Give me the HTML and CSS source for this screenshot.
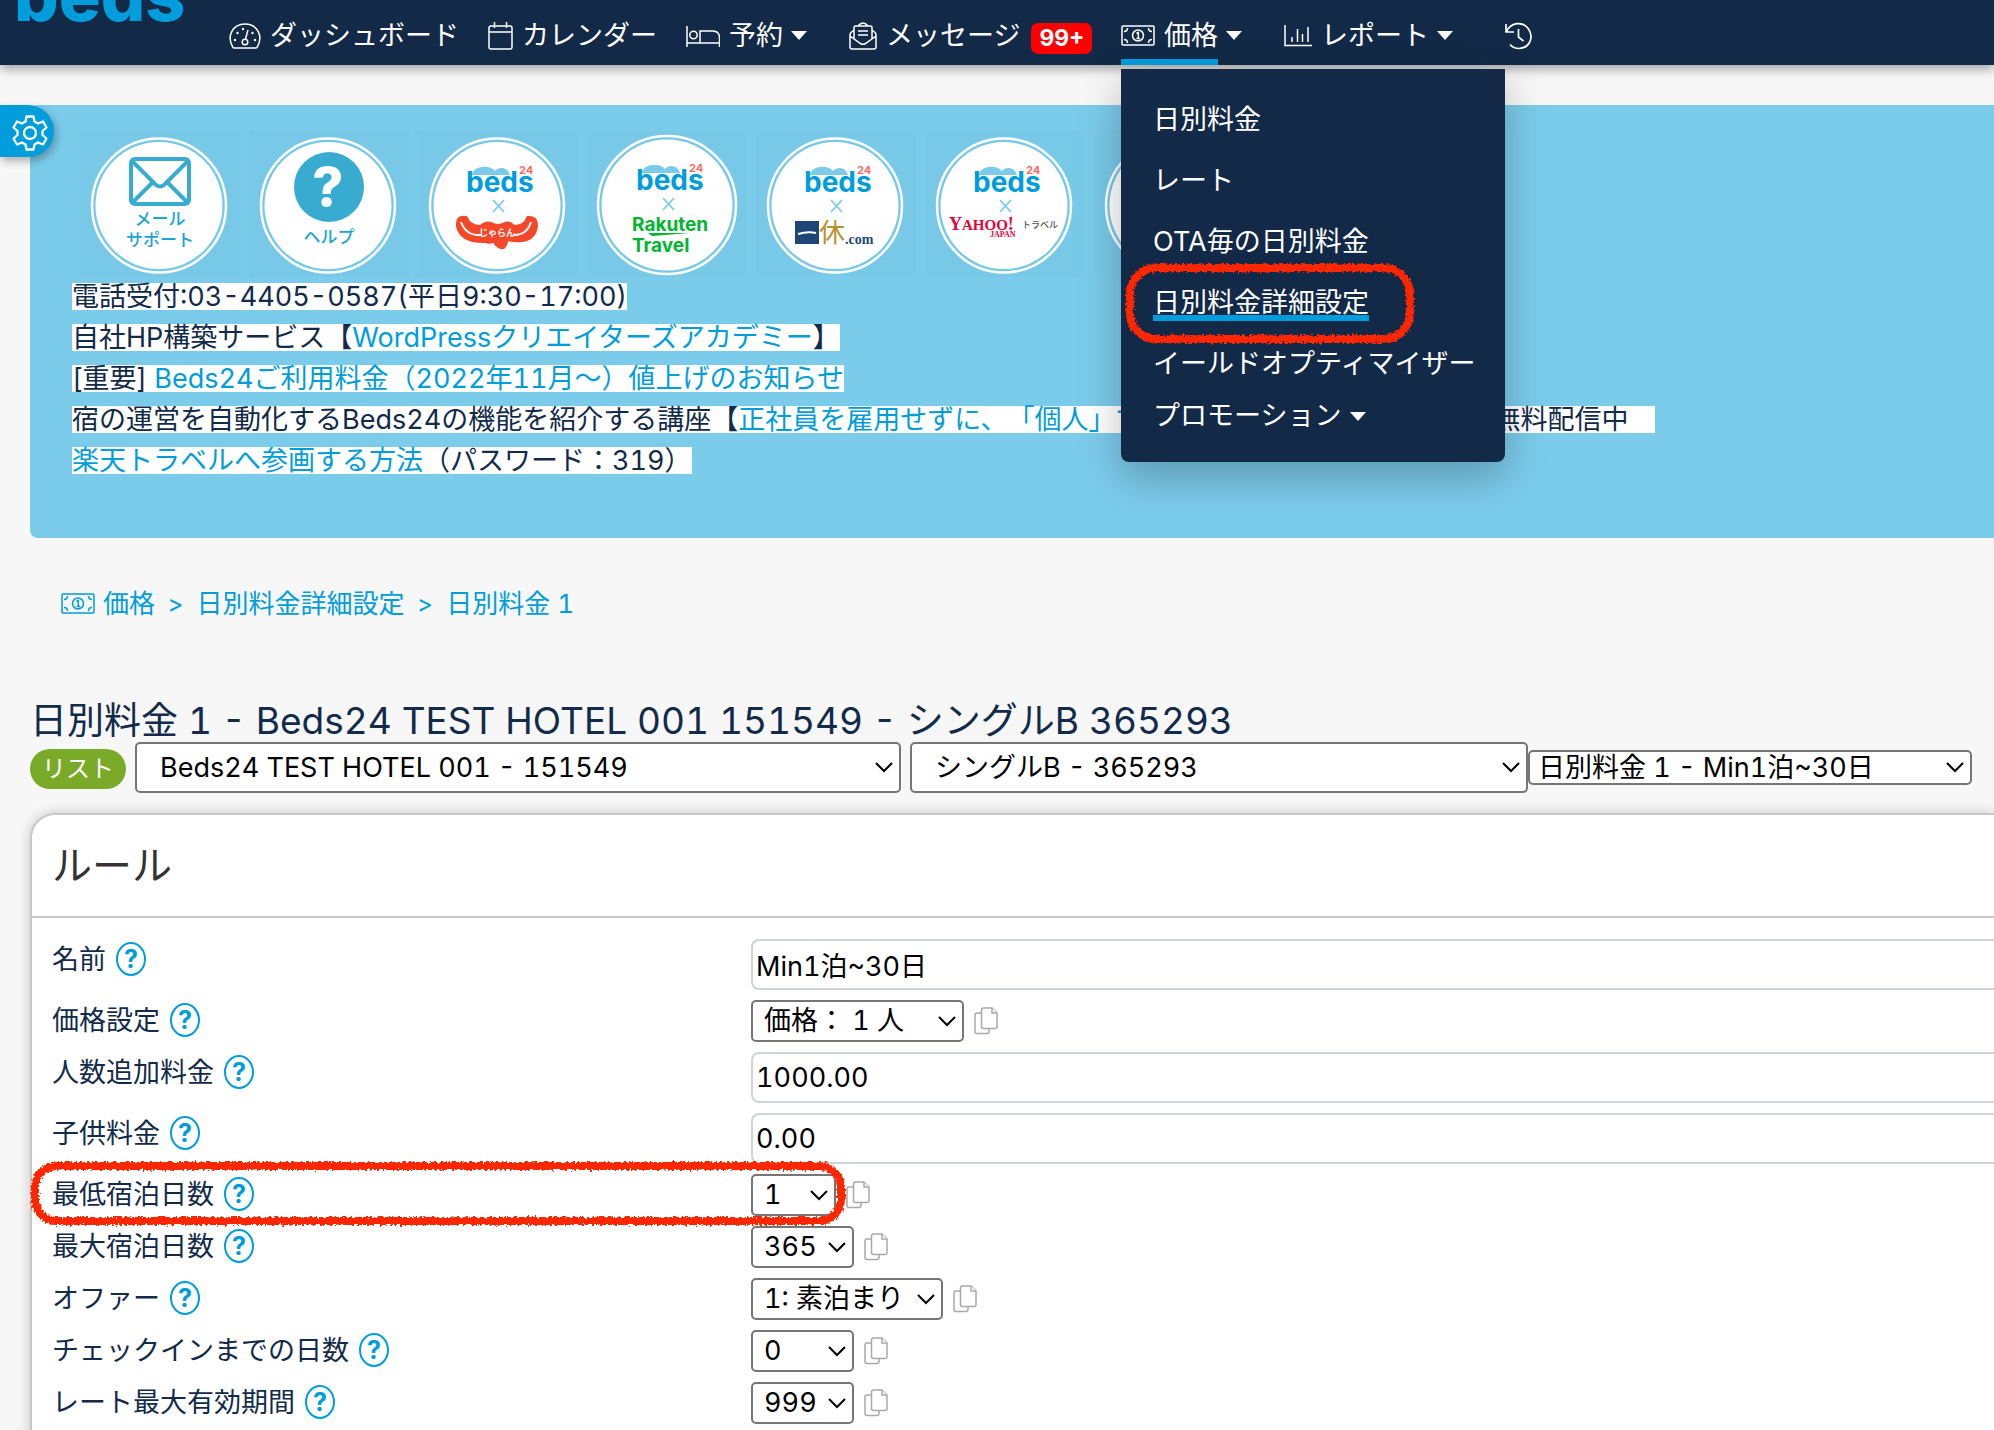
FILE: index.html
```html
<!DOCTYPE html>
<html lang="ja">
<head>
  <meta charset="UTF-8">
  <meta name="viewport" content="width=device-width, initial-scale=1.0">
  <title>日別料金詳細設定 - Beds24</title>
  <link rel="stylesheet" href="styles.css">
</head>
<body>

  <!-- Shared shapes -->
  <svg class="sprite" aria-hidden="true">
    <symbol id="i-money" viewBox="0 0 34 21">
      <g fill="none" stroke="currentColor" stroke-width="1.5">
        <rect x="1" y="1" width="32" height="19" rx="1"/>
        <circle cx="17" cy="10.500" r="5.500"/>
        <path d="M3 6.500Q6.500 6.500 6.500 3M27.500 3Q27.500 6.500 31 6.500M3 14.500Q6.500 14.500 6.500 18M27.500 18Q27.500 14.500 31 14.500M15.500 8.500l1.800-1v6M15.500 13.500h3.500"/>
      </g>
    </symbol>
    <symbol id="i-copy" viewBox="0 0 24 28">
      <g fill="#fff" stroke="#a9a9a9" stroke-width="1.500">
        <path d="M3 6h10a2 2 0 0 1 2 2v16.500a2 2 0 0 1-2 2H3a2 2 0 0 1-2-2V8a2 2 0 0 1 2-2z"/>
        <path d="M9.500 1H18l5 5v13.500a2 2 0 0 1-2 2H9.500a2 2 0 0 1-2-2V3a2 2 0 0 1 2-2z"/>
        <path d="M18 1v5h5"/>
      </g>
    </symbol>
    <symbol id="ring" viewBox="0 0 160 146">
      <rect width="160" height="146" fill="#78c9e8"/>
      <circle cx="79" cy="74.500" r="67" fill="none" stroke="#fff" stroke-width="2.500"/>
      <circle cx="79" cy="74.500" r="63.500" fill="#fff"/>
    </symbol>
    <symbol id="beds" viewBox="0 0 70 50">
      <path d="M7 10c1-9 17-11 23-4 4-5 13-4 15 4z" fill="#7bcbea"/>
      <text x="1" y="27" class="logo-beds">beds</text>
      <text x="54" y="9" class="logo-24">24</text>
      <path d="M28 35l11 12M39 35L28 47" stroke="#7bcbea" stroke-width="1.800"/>
    </symbol>
    <filter id="crayon" x="-5%" y="-15%" width="110%" height="130%">
      <feTurbulence type="fractalNoise" baseFrequency="0.4" numOctaves="2" seed="4"/>
      <feDisplacementMap in="SourceGraphic" scale="6" xChannelSelector="R" yChannelSelector="G"/>
    </filter>
  </svg>

  <!-- Navigation -->
  <header class="navbar">
    <a href="#" class="logo">beds</a>
    <nav class="nav">
      <a href="#" class="nav-item">
        <svg class="nav-icon" width="32" height="26" viewBox="0 0 32 26" fill="none" stroke="currentColor" stroke-width="1.500"><path d="M4 24.500C-3 13 4 1 16 1s19 12 12 23.500q-.5.500-1 .5H5q-.5 0-1-.5z"/><circle cx="16" cy="19" r="2.800"/><path d="M16.500 16l2.500-9"/><g fill="currentColor" stroke="none"><circle cx="6" cy="17" r="1.200"/><circle cx="8.500" cy="10" r="1.200"/><circle cx="14" cy="6" r="1.200"/><circle cx="23.500" cy="10" r="1.200"/><circle cx="26" cy="17" r="1.200"/></g></svg>
        <span>ダッシュボード</span>
      </a>
      <a href="#" class="nav-item">
        <svg class="nav-icon" width="25" height="28" viewBox="0 0 25 28" fill="none" stroke="currentColor" stroke-width="1.500"><rect x="1" y="4" width="23" height="23" rx="2"/><path d="M1 10h23M6.500 0v6M18.500 0v6"/></svg>
        <span>カレンダー</span>
      </a>
      <a href="#" class="nav-item has-menu">
        <svg class="nav-icon" width="34" height="22" viewBox="0 0 34 22" fill="none" stroke="currentColor" stroke-width="1.500"><path d="M1 1v21M1 18h32.500v4M33.500 18v-5q0-7-7-7H14v12"/><circle cx="7.500" cy="10" r="3.700"/></svg>
        <span>予約</span><i class="caret"></i>
      </a>
      <a href="#" class="nav-item">
        <svg class="nav-icon" width="28" height="28" viewBox="0 0 28 28" fill="none" stroke="currentColor" stroke-width="1.500"><path d="M5 8l-3 2.500Q1 11.500 1 13v12q0 2 2 2h22q2 0 2-2V13q0-1.500-1-2.500L23 8M1 14l10.500 7.500q2.500 1.500 5 0L27 14M5 16.500V5.500q0-1.500 1.500-1.500h15q1.500 0 1.500 1.500v11M9 4q5-6 10 0M9 9h10M9 13h10"/></svg>
        <span>メッセージ</span><b class="badge">99+</b>
      </a>
      <div class="nav-group">
        <a href="#" class="nav-item has-menu active">
          <svg class="nav-icon" width="34" height="21"><use href="#i-money"/></svg>
          <span>価格</span><i class="caret"></i>
        </a>
        <ul class="menu">
          <li><a href="#">日別料金</a></li>
          <li><a href="#">レート</a></li>
          <li><a href="#">OTA毎の日別料金</a></li>
          <li class="marked">
            <a href="#" class="current">日別料金詳細設定</a>
            <svg class="mark mark-menu"><rect x="5" y="5" width="280" height="71" rx="26"/></svg>
          </li>
          <li><a href="#">イールドオプティマイザー</a></li>
          <li class="last"><a href="#">プロモーション</a><i class="caret"></i></li>
        </ul>
      </div>
      <a href="#" class="nav-item has-menu">
        <svg class="nav-icon" width="28" height="22" viewBox="0 0 28 22" fill="none" stroke="currentColor" stroke-width="1.500"><path d="M1 0v20.500h27M8 17v-5M13.500 17V4M18.500 17V9M24 17V2"/></svg>
        <span>レポート</span><i class="caret"></i>
      </a>
      <a href="#" class="nav-item history" aria-label="履歴">
        <svg width="27" height="28" viewBox="0 0 27 28" fill="none" stroke="currentColor" stroke-width="1.700"><path d="M1 2v8h8M1.500 9.500C6 0 18-1 23.500 7S25 26 14 26.500q-5.500 0-9-4M13.500 7v8l5 4"/></svg>
      </a>
    </nav>
  </header>

  <button type="button" class="settings-tab" aria-label="設定">
    <svg width="36" height="36" viewBox="0 0 36 36" fill="none" stroke="#fff" stroke-width="2.300" stroke-linejoin="round"><path d="M14.500 1.500h7l1 5 3.500 2 5-2 3.500 6-4 3.500v4l4 3.500-3.500 6-5-2-3.500 2-1 5h-7l-1-5-3.500-2-5 2-3.500-6 4-3.500v-4l-4-3.500 3.500-6 5 2 3.500-2z"/><circle cx="18" cy="18" r="6"/></svg>
  </button>

  <main>
    <!-- Info banner -->
    <section class="banner">
      <div class="partners">
        <a href="#"><svg width="160" height="146" viewBox="0 0 160 146"><use href="#ring"/>
          <g fill="none" stroke="#38abd0" stroke-width="4"><rect x="51" y="28" width="58" height="45" rx="4"/><path d="M52 30l24 24q4 3 8 0l24-24M52 72l21-21M108 72L87 51"/></g>
          <text x="80" y="94" class="partner-text">メール</text><text x="80" y="115" class="partner-text">サポート</text></svg></a>
        <a href="#"><svg width="160" height="146" viewBox="0 0 160 146"><use href="#ring"/>
          <circle cx="80" cy="56" r="35" fill="#38abd0"/><text x="79" y="75" class="help-mark">?</text>
          <text x="80" y="112" class="partner-text">ヘルプ</text></svg></a>
        <a href="#"><svg width="160" height="146" viewBox="0 0 160 146"><use href="#ring"/>
          <use href="#beds" x="47" y="34" width="70" height="50"/>
          <path d="M40 95q-1-10 8-8 3 9 15 9 5-5 10-3 7 4 14 0 5-2 8 3 13 0 15-9 8-1 8 8-2 16-22 14-5 0-7-2-2 11-6 9-5-1-6-7-5 3-9 1-25 1-28-15z" fill="#f5482a" stroke="#f5482a" stroke-width="4" stroke-linejoin="round"/>
          <path d="M43 91q5 14 20 13M113 91q-4 13-17 13" fill="none" stroke="#fff" stroke-width="2"/>
          <text x="79" y="105" class="logo-jalan">じゃらん</text></svg></a>
        <a href="#"><svg width="160" height="146" viewBox="0 0 160 146"><rect width="160" height="146" fill="#78c9e8"/>
          <circle cx="80" cy="74" r="69" fill="none" stroke="#fff" stroke-width="2.500"/><circle cx="80" cy="74" r="65.500" fill="#fff"/>
          <use href="#beds" x="48" y="32" width="70" height="50"/>
          <text x="45" y="100" class="logo-rakuten">Rakuten</text><path d="M61 102h42l-38 3z" fill="#00b52f"/>
          <text x="45" y="121" class="logo-rakuten">Travel</text></svg></a>
        <a href="#"><svg width="160" height="146" viewBox="0 0 160 146"><use href="#ring"/>
          <use href="#beds" x="47" y="34" width="70" height="50"/>
          <rect x="39" y="90" width="24" height="23" fill="#1d4677"/><path d="M42 103q10-3 18-1" stroke="#fff" stroke-width="2" fill="none"/>
          <text x="63" y="111" class="logo-kyu">休</text><text x="89" y="113" class="logo-com">.com</text></svg></a>
        <a href="#"><svg width="160" height="146" viewBox="0 0 160 146"><use href="#ring"/>
          <use href="#beds" x="47" y="34" width="70" height="50"/>
          <text x="24" y="99" class="logo-yahoo">Y<tspan font-size="15">AHOO</tspan>!</text><text x="65" y="106" class="logo-japan">JAPAN</text>
          <text x="97" y="97" class="logo-travel">トラベル</text></svg></a>
        <a href="#"><svg width="160" height="146" viewBox="0 0 160 146"><use href="#ring"/></svg></a>
      </div>
      <p>電話受付:03-4405-0587(平日9:30-17:00)</p>
      <p>自社HP構築サービス【<a href="#">WordPressクリエイターズアカデミー</a>】</p>
      <p>[重要] <a href="#">Beds24ご利用料金（2022年11月〜）値上げのお知らせ</a></p>
      <p>宿の運営を自動化するBeds24の機能を紹介する講座【<a href="#">正社員を雇用せずに、「個人」で宿泊施設を運営する方法</a>】を無料配信中　</p>
      <p><a href="#">楽天トラベルへ参画する方法</a>（パスワード：319）</p>
    </section>

    <nav class="breadcrumb">
      <svg width="34" height="21"><use href="#i-money"/></svg>
      <a href="#">価格</a><span>&gt;</span><a href="#">日別料金詳細設定</a><span>&gt;</span><a href="#">日別料金 1</a>
    </nav>

    <h1>日別料金 1 - Beds24 TEST HOTEL 001 151549 - シングルB 365293</h1>

    <div class="toolbar">
      <button type="button" class="list-btn">リスト</button>
      <select class="select-lg property" aria-label="施設"><option>Beds24 TEST HOTEL 001 - 151549</option></select>
      <select class="select-lg room" aria-label="部屋"><option>シングルB - 365293</option></select>
      <select class="rate" aria-label="料金"><option>日別料金 1 - Min1泊~30日</option></select>
    </div>

    <!-- Rule card -->
    <section class="card">
      <h2>ルール</h2>
      <form class="rules">
        <div class="row">
          <div class="label"><label for="name">名前</label><a href="#" class="help">?</a></div>
          <input type="text" id="name" value="Min1泊~30日">
        </div>
        <div class="row">
          <div class="label"><label for="price">価格設定</label><a href="#" class="help">?</a></div>
          <div class="field"><select id="price" class="w-lg"><option>価格： 1 人</option></select><svg width="24" height="28"><use href="#i-copy"/></svg></div>
        </div>
        <div class="row">
          <div class="label"><label for="extra">人数追加料金</label><a href="#" class="help">?</a></div>
          <input type="text" id="extra" value="1000.00">
        </div>
        <div class="row">
          <div class="label"><label for="child">子供料金</label><a href="#" class="help">?</a></div>
          <input type="text" id="child" value="0.00">
        </div>
        <div class="row marked">
          <div class="label"><label for="min">最低宿泊日数</label><a href="#" class="help">?</a></div>
          <div class="field"><select id="min" class="w-xs"><option>1</option></select><svg width="24" height="28"><use href="#i-copy"/></svg></div>
          <svg class="mark mark-row"><rect x="5" y="5" width="806" height="55" rx="22"/></svg>
        </div>
        <div class="row">
          <div class="label"><label for="max">最大宿泊日数</label><a href="#" class="help">?</a></div>
          <div class="field"><select id="max" class="w-sm"><option>365</option></select><svg width="24" height="28"><use href="#i-copy"/></svg></div>
        </div>
        <div class="row">
          <div class="label"><label for="offer">オファー</label><a href="#" class="help">?</a></div>
          <div class="field"><select id="offer" class="w-md"><option>1: 素泊まり</option></select><svg width="24" height="28"><use href="#i-copy"/></svg></div>
        </div>
        <div class="row">
          <div class="label"><label for="days">チェックインまでの日数</label><a href="#" class="help">?</a></div>
          <div class="field"><select id="days" class="w-sm"><option>0</option></select><svg width="24" height="28"><use href="#i-copy"/></svg></div>
        </div>
        <div class="row">
          <div class="label"><label for="valid">レート最大有効期間</label><a href="#" class="help">?</a></div>
          <div class="field"><select id="valid" class="w-sm"><option>999</option></select><svg width="24" height="28"><use href="#i-copy"/></svg></div>
        </div>
      </form>
    </section>
  </main>

</body>
</html>
```
FILE: styles.css
```css
* {
  box-sizing: border-box;
  margin: 0;
  padding: 0;
}

body {
  font-family: Inter, "Noto Sans CJK JP", sans-serif;
  font-size: 27px;
  font-weight: 400;
  font-variant-numeric: tabular-nums;
  text-spacing-trim: space-all;
  line-height: 41px;
  color: #122b4a;
  background: #f7f7f7;
  overflow: hidden;
}

a {
  color: #009ddd;
  text-decoration: none;
}

svg {
  display: block;
  flex: none;
}

.sprite {
  position: absolute;
  width: 0;
  height: 0;
}

/* navbar */
.navbar {
  position: relative;
  z-index: 10;
  display: flex;
  height: 65px;
  padding-left: 14px;
  background: #122a47;
  box-shadow: 0 4px 10px rgba(0, 0, 0, 0.35);
}

.logo {
  width: 215px;
  height: 65px;
  margin-top: -4px;
  font-size: 70px;
  font-weight: 800;
  line-height: 0;
}

.nav {
  display: flex;
  gap: 29px;
}

.nav-item {
  display: flex;
  align-items: center;
  height: 65px;
  padding-top: 6px;
  color: #fff;
  white-space: nowrap;
}

.nav-icon {
  margin-right: 9px;
}

.has-menu {
  padding-right: 13px;
}

.caret {
  margin-left: 8px;
  border: 8px solid transparent;
  border-top: 9px solid #fff;
  border-bottom: 0;
}

.badge {
  height: 31px;
  margin: 6px 0 0 11px;
  padding: 0 8px;
  border-radius: 7px;
  background: #f00;
  font-size: 23px;
  font-weight: 700;
  line-height: 31px;
}

.nav-group {
  position: relative;
}

.active::after {
  content: "";
  position: absolute;
  left: 0;
  bottom: 0;
  width: 97px;
  height: 6px;
  background: #009ddd;
}

.history {
  padding-left: 10px;
}

.menu {
  position: absolute;
  top: 69px;
  left: 0;
  width: 384px;
  padding: 20px 32px 24px;
  border-radius: 0 0 8px 8px;
  background: #122a47;
  box-shadow: 0 15px 40px rgba(0, 0, 0, 0.25);
  list-style: none;
}

.menu li {
  display: flex;
  align-items: center;
  height: 61px;
}

.menu li.last {
  height: 44px;
}

.menu a {
  color: #fff;
  line-height: 36px;
  white-space: nowrap;
}

.menu .current {
  box-shadow: inset 0 -6px #009ddd;
}

/* hand-drawn highlights */
.marked {
  position: relative;
}

.mark {
  position: absolute;
  fill: none;
  stroke: #ff2600;
  stroke-width: 8px;
  filter: url(#crayon);
  pointer-events: none;
}

.mark-menu {
  top: -9px;
  left: -28px;
  width: 290px;
  height: 81px;
}

.mark-row {
  top: -13px;
  left: -22px;
  width: 816px;
  height: 65px;
}

.settings-tab {
  position: absolute;
  z-index: 5;
  top: 105px;
  left: 0;
  width: 54px;
  height: 52px;
  padding: 4px 0 0 12px;
  border: 0;
  border-radius: 0 26px 26px 0;
  background: #009ddd;
  box-shadow: 2px 4px 8px rgba(0, 0, 0, 0.3);
}

main {
  padding: 40px 0 0 30px;
}

/* banner */
.banner {
  height: 433px;
  padding: 26px 42px;
  border-radius: 8px 0 0 8px;
  background: #7bcbea;
}

.partners {
  display: flex;
  gap: 9px;
  padding: 0 0 6px 8px;
}

.banner p {
  width: fit-content;
  margin-bottom: 14px;
  background: #fff;
  line-height: 27px;
  white-space: nowrap;
}

.partner-text {
  fill: #1ba5d3;
  font-size: 17px;
  font-weight: 500;
  text-anchor: middle;
}

.help-mark {
  fill: #fff;
  font-size: 54px;
  font-weight: 800;
  text-anchor: middle;
}

.logo-beds {
  fill: #009ddd;
  font-size: 28px;
  font-weight: 700;
}

.logo-24 {
  fill: #f86a62;
  font-size: 11px;
  font-weight: 700;
}

.logo-jalan {
  fill: #fff;
  font-size: 9px;
  font-weight: 700;
  text-anchor: middle;
}

.logo-rakuten {
  fill: #00b52f;
  font-size: 19px;
  font-weight: 700;
}

.logo-kyu {
  fill: #b8902e;
  font-family: "Noto Sans CJK JP", sans-serif;
  font-size: 26px;
}

.logo-com {
  fill: #1d4677;
  font: 700 14px "Liberation Serif", serif;
}

.logo-yahoo {
  fill: #e8003a;
  font: 700 18px "Liberation Serif", serif;
}

.logo-japan {
  fill: #e8003a;
  font: 700 8px "Liberation Serif", serif;
}

.logo-travel {
  fill: #555;
  font-size: 9px;
  font-weight: 500;
}

/* page title */
.breadcrumb {
  display: flex;
  align-items: center;
  padding: 45px 0 0 31px;
  color: #009ddd;
  font-size: 26px;
}

.breadcrumb svg {
  margin-right: 8px;
}

.breadcrumb span {
  margin: 0 13px;
  font-size: 24px;
}

h1 {
  margin-top: 75px;
  font-size: 37px;
  font-weight: 400;
  line-height: 43px;
}

.toolbar {
  display: flex;
  align-items: baseline;
}

.list-btn {
  width: 96px;
  height: 40px;
  margin-right: 9px;
  border: 0;
  border-radius: 20px;
  background: #7aab28;
  color: #fff;
  font: 400 24px/40px Inter, "Noto Sans CJK JP", sans-serif;
}

select {
  appearance: none;
  height: 42px;
  padding: 0 30px 0 11px;
  border: 2px solid #767676;
  border-radius: 5px;
  background: #fff url("data:image/svg+xml,%3Csvg xmlns='http://www.w3.org/2000/svg' width='18' height='11' fill='none' stroke='%23000' stroke-width='2'%3E%3Cpath d='M1 1l8 8 8-8'/%3E%3C/svg%3E") no-repeat right 6px center;
  color: #000;
  font: inherit;
  font-variant-numeric: tabular-nums;
  line-height: 36px;
}

.select-lg {
  height: 51px;
  margin-right: 9px;
  padding-left: 23px;
  line-height: 45px;
}

.property {
  width: 766px;
}

.room {
  width: 618px;
  margin-right: 0;
}

.rate {
  width: 444px;
  height: 35px;
  padding-left: 8px;
  line-height: 29px;
}

/* card */
.card {
  margin-top: 20px;
  border: 2px solid #c8c8c8;
  border-right: 0;
  border-radius: 25px 0 0 0;
  background: #fff;
  box-shadow: 0 0 14px rgba(0, 0, 0, 0.2);
}

.card h2 {
  padding: 0 20px;
  border-bottom: 2px solid #c8c8c8;
  color: #333;
  font-size: 40px;
  font-weight: 400;
  line-height: 101px;
}

.rules {
  padding: 21px 0 20px 20px;
}

.row {
  display: grid;
  grid-template-columns: 36% 1fr;
  align-items: start;
  margin-bottom: 10px;
}

.label,
.field {
  display: flex;
  align-items: center;
  gap: 10px;
  height: 42px;
}

.label {
  height: 40px;
}

.help {
  width: 30px;
  height: 34px;
  border: 2px solid #009ddd;
  border-radius: 50%;
  font-size: 25px;
  font-weight: 700;
  line-height: 30px;
  text-align: center;
}

input {
  width: 100%;
  height: 51px;
  padding: 0 3px;
  border: 2px solid #ced4da;
  border-right: 0;
  border-radius: 8px 0 0 8px;
  background: #fff;
  color: #000;
  font: inherit;
  font-variant-numeric: tabular-nums;
}

.w-xs { width: 85px; }
.w-sm { width: 103px; }
.w-md { width: 192px; }
.w-lg { width: 213px; }
```
